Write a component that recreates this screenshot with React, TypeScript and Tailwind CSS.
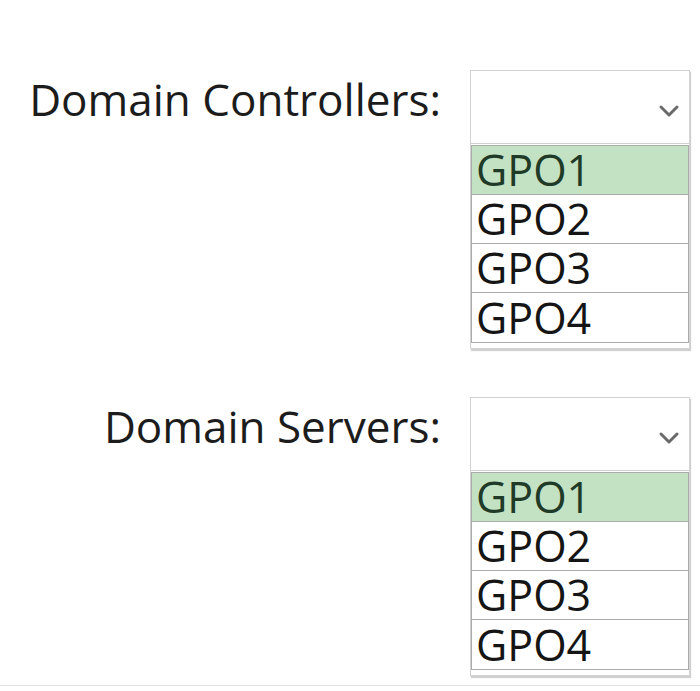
import React from 'react';

const options = ['GPO1', 'GPO2', 'GPO3', 'GPO4'];

type PickerProps = {
  label: string;
  selected: string;
};

const Chevron: React.FC = () => (
  <svg width="22" height="14" viewBox="0 0 22 14" fill="none" className="mt-[8px]">
    <path d="M3 3 L11 11 L19 3" stroke="#6a6a6a" strokeWidth="3" strokeLinecap="round" strokeLinejoin="round" />
  </svg>
);

const GpoPicker: React.FC<PickerProps> = ({ label, selected }) => (
  <div className="flex items-start">
    <div className="w-[441px] pt-[4px] text-right text-[44px] leading-[50px] text-[#1c1c1c] whitespace-nowrap">
      {label}
    </div>
    <div className="ml-[29px] w-[220px] border border-[#d2d2d2] bg-white pb-[5px] shadow-[1px_2px_1px_rgba(0,0,0,0.18)]">
      <div className="flex h-[73px] items-center justify-end border-b border-[#cfcfcf] pr-[9px]">
        <Chevron />
      </div>
      <ul className="mt-[1px] flex flex-col divide-y divide-[#ababab] border border-[#ababab]">
        {options.map((opt) => (
          <li
            key={opt}
            className={`flex h-[49px] items-center pl-[4px] text-[43px] leading-[46px] ${
              opt === selected ? 'bg-[#c3e2c3] text-[#1f3b28]' : 'bg-white text-[#151515]'
            }`}
          >
            {opt}
          </li>
        ))}
      </ul>
    </div>
  </div>
);

export default function App() {
  return (
    <div className="h-[691px] w-[700px] overflow-hidden bg-white font-['Open_Sans',sans-serif]">
      <div className="h-[686px] border-b border-[#e2e2e2] pt-[70px]">
        <div className="flex flex-col gap-[48px]">
          <GpoPicker label="Domain Controllers:" selected="GPO1" />
          <GpoPicker label="Domain Servers:" selected="GPO1" />
        </div>
      </div>
    </div>
  );
}
